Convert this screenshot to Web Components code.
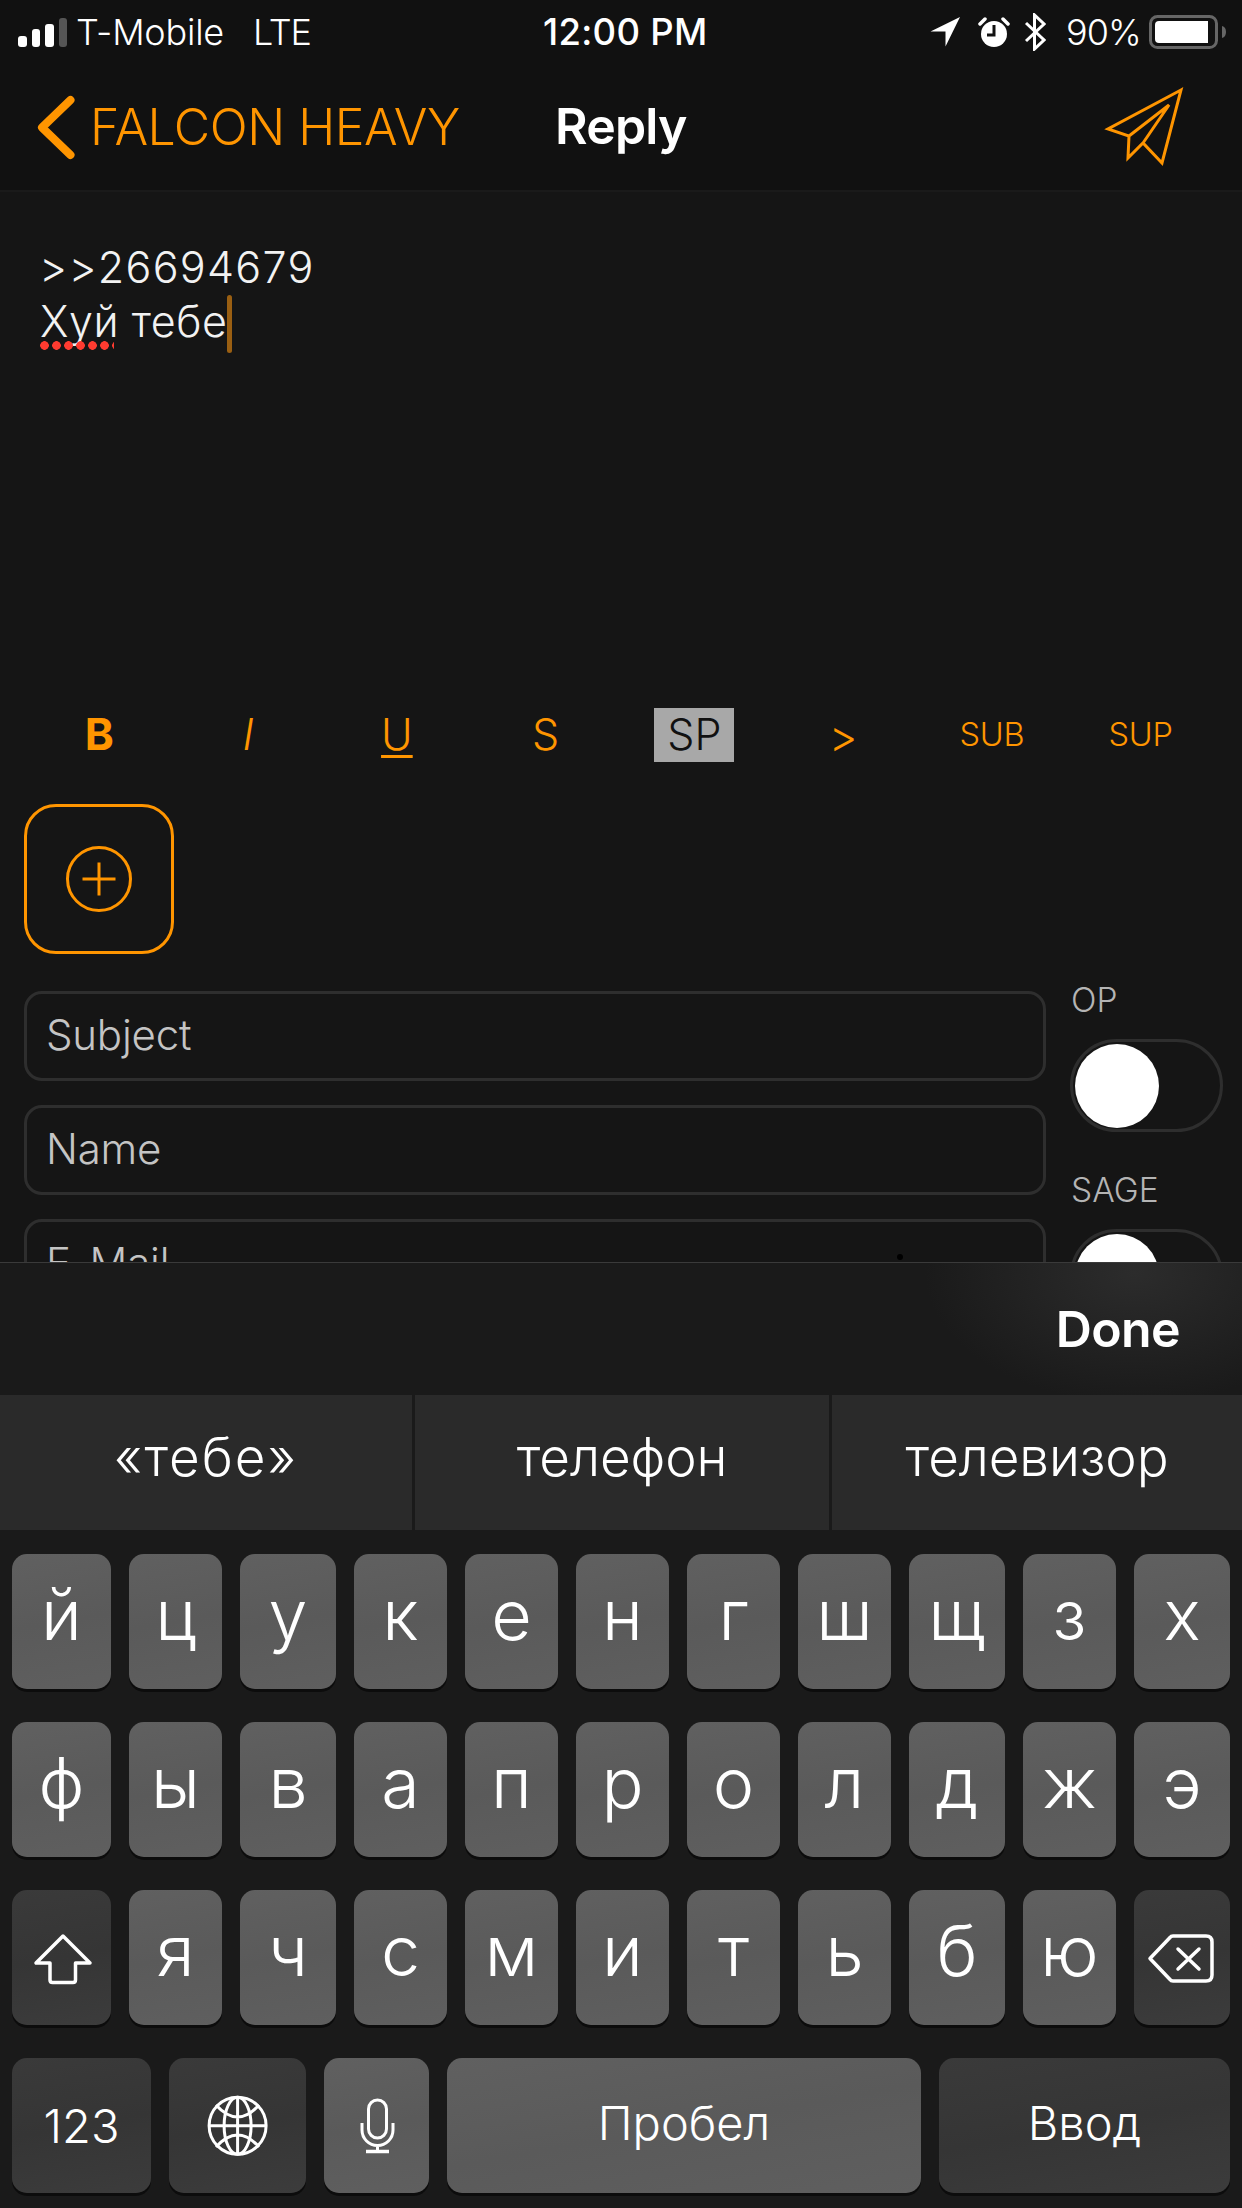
<!DOCTYPE html>
<html lang="ru"><head><meta charset="utf-8"><title>Reply</title>
<style>
html,body{margin:0;padding:0;background:#151515}
body{font-family:Inter,"Noto Sans",sans-serif;color:#fff;width:1242px;height:2208px;overflow:hidden}
</style></head>
<body>
<x-app>
  <x-status-bar></x-status-bar>
  <x-nav-bar back="FALCON HEAVY" title="Reply"></x-nav-bar>
  <x-reply-form></x-reply-form>
  <x-accessory-bar>Done</x-accessory-bar>
  <x-suggestions></x-suggestions>
  <x-keyboard></x-keyboard>
</x-app>
<script>
function def(name, css, html, init){
  customElements.define(name, class extends HTMLElement{
    constructor(){super();const r=this.attachShadow({mode:'open'});
      const h=typeof html==='function'?html(this):html;
      r.innerHTML='<style>'+css+'</style>'+h;}
    connectedCallback(){
      if(typeof html==='function'){const r=this.shadowRoot;r.innerHTML='<style>'+css+'</style>'+html(this);}
      if(init)init(this);}
  });
}
def('x-app',':host{display:flex;flex-direction:column;width:1242px;height:2208px;overflow:hidden;background:#151515}','<slot></slot>');

def('x-status-bar',`
:host{display:flex;align-items:center;height:64px;background:#111;color:#fff;font-size:36px;font-weight:300;flex:none;position:relative}
.l{display:flex;align-items:center;width:543px;padding-left:18px;box-sizing:border-box}
.bars{display:flex;align-items:flex-end;gap:5px;height:29px;margin-top:1px}
.bars i{display:block;width:8.5px;border-radius:3px;background:#fff}
.car{margin-left:9px;letter-spacing:-.2px;padding-bottom:1px}.lte{margin-left:29px;letter-spacing:-1.2px;padding-bottom:1px}
.t{font-weight:500;font-size:36.5px;letter-spacing:.3px;width:166px;white-space:nowrap}
.r{display:flex;align-items:center;margin-left:auto;height:64px}
svg{display:block}
.pct{letter-spacing:-1px;width:72px;margin-left:20px}
.bat{margin-left:11px;margin-right:15px}
`,`<div class="l"><div class="bars"><i style="height:11px"></i><i style="height:18px"></i><i style="height:23px"></i><i style="height:29px;background:#555"></i></div><span class="car">T-Mobile</span><span class="lte">LTE</span></div>
<span class="t">12:00 PM</span>
<div class="r">
<svg width="32" height="32" viewBox="0 0 32 32"><path d="M31 1 L1.500 15.500 H16.500 V30.500 Z" fill="#fff"/></svg>
<svg width="32" height="32" viewBox="0 0 32 32" style="margin-left:17px"><circle cx="16" cy="18" r="13" fill="#fff"/><path d="M2 8 L7 3 M30 8 L25 3" stroke="#fff" stroke-width="3.500" stroke-linecap="round"/><path d="M16 9 V19 H9" stroke="#111" stroke-width="3" fill="none"/></svg>
<svg width="22" height="38" viewBox="0 0 22 38" style="margin-left:14px"><path d="M2 10 L20 27 L10.500 36 V2 L20 11 L2 28" fill="none" stroke="#fff" stroke-width="3"/></svg>
<span class="pct">90%</span>
<svg class="bat" width="78" height="36" viewBox="0 0 78 36"><rect x="1.500" y="2.500" width="66" height="31" rx="7" fill="none" stroke="#666" stroke-width="3"/><path d="M6 11 Q6 7 10 7 H59 V29 H10 Q6 29 6 25 Z" fill="#fff"/><path d="M73 12 Q77 13 77 18 Q77 23 73 24 Z" fill="#666"/></svg>
</div>`);

def('x-nav-bar',`
:host{display:flex;align-items:center;height:126px;background:#111;border-bottom:2px solid #1a1a1a;flex:none}
.back{display:flex;align-items:center;width:522px;margin-left:34px;flex:none;color:#ff9500;font-size:50px;font-weight:300;letter-spacing:-.5px;white-space:nowrap}
.back svg{margin-right:12px;flex:none}
.title{font-weight:600;font-size:50px;color:#fff;letter-spacing:-.8px;margin:-2px 0 0 -1px}
.send{margin-left:auto;margin-right:58px;display:block}
`,h=>`<div class="back"><svg width="44" height="70" viewBox="0 0 44 70"><path d="M36.500 8 L8 35.500 L36.500 63" fill="none" stroke="#ff9500" stroke-width="8" stroke-linecap="round" stroke-linejoin="round"/></svg><span>${h.getAttribute('back')||''}</span></div>
<span class="title">${h.getAttribute('title')||''}</span>
<svg class="send" width="80" height="84" viewBox="0 0 80 84"><path d="M77 5 L4 44 L25 51 L24 73 L39 58 L58 78 Z M25 51 L65 20 L39 58" fill="none" stroke="#ff9500" stroke-width="3" stroke-linejoin="miter"/></svg>`);

def('x-editor',`
:host{display:block;height:516px;box-sizing:border-box;padding:48px 0 0 40px;font-size:43px;font-weight:300;line-height:54px;color:#f2f2f2;letter-spacing:.55px;flex:none}
.first{letter-spacing:1.3px;margin-left:-1px}
.w{position:relative;display:inline-block}
.dots{position:absolute;left:0;top:47px;height:9px;width:74px;background:radial-gradient(circle at 4.500px 4.500px,#ff3b30 4px,transparent 4.600px) 0 0/12px 9px repeat-x}
.c{position:relative;display:inline-block;width:0;height:0}
.c::after{content:"";position:absolute;left:0;top:-42px;width:5px;height:58px;border-radius:2.500px;background:#9a5f12}
`,`<div class="first">&gt;&gt;26694679</div><div><span class="w">Хуй<i class="dots"></i></span> тебе<span class="c"></span></div>`);

def('x-format-bar',`
:host{display:grid;grid-template-columns:repeat(8,148.750px);padding-left:25px;height:54px;align-items:center;justify-items:center;color:#ff9500;font-size:43px;font-weight:300;flex:none}
span{display:block;line-height:53px;height:54px}
.b{font-weight:700;font-size:44px}
.i{font-style:italic}
.u{text-decoration:underline;text-decoration-thickness:3px;text-underline-offset:5px}
.sp{background:#a8a8a8;color:#111;width:80px;height:54px;text-align:center;line-height:52px}
.q{font-size:44px;line-height:56px}
.sm{font-size:32.5px;letter-spacing:-.2px}
`,`<span class="b">B</span><span class="i">I</span><span class="u">U</span><span>S</span><span class="sp">SP</span><span class="q">&gt;</span><span class="sm">SUB</span><span class="sm">SUP</span>`);

def('x-attach-button',`
:host{display:flex;align-items:center;justify-content:center;width:150px;height:150px;box-sizing:border-box;border:3px solid #ff9500;border-radius:32px;flex:none}
svg{display:block}
`,`<svg width="70" height="70" viewBox="0 0 70 70"><circle cx="35" cy="35" r="31.500" fill="none" stroke="#ff9500" stroke-width="3"/><path d="M18.500 35 H51.500 M35 18.500 V51.500" stroke="#ff9500" stroke-width="3" fill="none"/></svg>`);

def('x-text-field',`
:host{display:flex;align-items:center;height:90px;box-sizing:border-box;border:3px solid #2e2e2e;border-radius:18px;padding:0 0 4px 19px;font-size:42px;font-weight:300;color:#c4c4c4;flex:none;position:relative;letter-spacing:-.2px}
`,`<slot></slot>`);

def('x-switch',`
:host{display:block;width:153px;height:93px;box-sizing:border-box;border:3px solid #2e2e2e;border-radius:47px;position:relative;flex:none}
i{position:absolute;left:2px;top:2px;width:84px;height:84px;border-radius:50%;background:#fff}
`,`<i></i>`);

def('x-reply-form',`
:host{display:flex;flex-direction:column;height:1070px;overflow:hidden;flex:none;background:#151515;position:relative}
.body{padding:42px 0 0 24px;display:flex;flex-direction:column}
.row{display:flex;margin-top:37px}
.fields{display:flex;flex-direction:column;gap:24px;width:1022px;flex:none}
.side{margin-left:24px;display:flex;flex-direction:column;margin-top:-9px}
.lab{height:36px;line-height:36px;font-size:33.5px;font-weight:300;color:#b4b4b4;margin:0 0 21px 1px;letter-spacing:0}
x-switch{margin-bottom:40px}
.dot{position:absolute;left:897px;top:1062px;width:6px;height:6px;border-radius:50%;background:#000}
`,`<x-editor></x-editor><x-format-bar></x-format-bar>
<div class="body"><x-attach-button></x-attach-button>
<div class="row"><div class="fields"><x-text-field>Subject</x-text-field><x-text-field>Name</x-text-field><x-text-field>E-Mail</x-text-field></div>
<div class="side"><div class="lab">OP</div><x-switch></x-switch><div class="lab">SAGE</div><x-switch></x-switch></div></div></div><i class="dot"></i>`);

def('x-accessory-bar',`
:host{display:flex;align-items:center;justify-content:flex-end;height:133px;box-sizing:border-box;border-top:1px solid #3a3a3a;padding-right:62px;flex:none;font-size:50px;font-weight:600;color:#fff;letter-spacing:-.6px;background:radial-gradient(ellipse 210px 130px at 1135px 10px,#2c2c2c,#1a1a1a)}
`,`<slot></slot>`);

def('x-suggestions',`
:host{display:grid;grid-template-columns:412px 3px 414px 3px 1fr;height:135px;background:#2a2a2a;font-size:53px;font-weight:300;color:#fff;flex:none;letter-spacing:-.1px}
span{display:flex;align-items:center;justify-content:center;padding-bottom:11px}
.a{letter-spacing:2px}
i{background:#1a1a1a}
`,`<span class="a">«тебе»</span><i></i><span>телефон</span><i></i><span>телевизор</span>`);

def('x-key',`
:host{display:flex;align-items:center;justify-content:center;height:135px;box-sizing:border-box;border-radius:15px;background:linear-gradient(170deg,#606060,#5a5a5a 50%,#5f5f5f);box-shadow:0 3px 0 #0c0c0c;color:#fff;font-size:70px;font-weight:300;flex:none;position:relative;padding-bottom:14px}
:host([dark]){background:linear-gradient(170deg,#3a3a3a,#353535 50%,#3c3c3c)}
:host([small]){font-size:47px;padding-bottom:0}
:host([up]){padding-bottom:7px}
:host([icon]){padding:0}
::slotted(svg){display:block}
`,`<slot></slot>`);

const rows=[
 [['й',99],['ц',93],['у',96],['к',93],['е',93],['н',93],['г',93],['ш',93],['щ',96],['з',93],['х',96]],
 [['ф',99],['ы',93],['в',96],['а',93],['п',93],['р',93],['о',93],['л',93],['д',96],['ж',93],['э',96]],
];
const k=(t,w)=>`<x-key style="width:${w}px">${t}</x-key>`;
const shift=`<svg width="99" height="135" viewBox="0 0 99 135"><path d="M51 46 L24 73 H38 V90 Q38 92.500 40.500 92.500 H61 Q63.500 92.500 63.500 90 V73 H78 Z" fill="none" stroke="#fff" stroke-width="3.500" stroke-linejoin="round"/></svg>`;
const bs=`<svg width="96" height="135" viewBox="0 0 96 135"><path d="M16 68.500 L36 47.500 Q37 46 39 46 H72 Q78 46 78 52 V85 Q78 91 72 91 H39 Q37 91 36 89.500 Z" fill="none" stroke="#fff" stroke-width="3.500" stroke-linejoin="round"/><path d="M44 59 L65 79 M65 59 L44 79" stroke="#fff" stroke-width="3.500" stroke-linecap="round"/></svg>`;
const globe=`<svg width="137" height="135" viewBox="0 0 137 135"><g fill="none" stroke="#fff" stroke-width="3"><circle cx="68.600" cy="67.700" r="28.500"/><ellipse cx="68.600" cy="67.700" rx="13.500" ry="28.500"/><path d="M68.600 39 V96.500 M40 67.700 H97 M47 47 Q68.600 71 90 47 M47 89 Q68.600 65 90 89"/></g></svg>`;
const mic=`<svg width="105" height="135" viewBox="0 0 105 135"><g fill="none" stroke="#fff" stroke-width="3"><rect x="44.500" y="42" width="18" height="38" rx="9"/><path d="M38 65 V72 A15.500 15.500 0 0 0 69 72 V65 M53.500 87.500 V94"/></g><path d="M42 93.500 H65" stroke="#fff" stroke-width="3.500"/></svg>`;
def('x-keyboard',`
:host{display:flex;flex-direction:column;gap:33px;background:#1a1a1a;padding:24px 12px 0;height:691px;box-sizing:border-box;flex:none}
.row{display:flex;gap:18px}
`,`<div class="row">${rows[0].map(r=>k(r[0],r[1])).join('')}</div>
<div class="row">${rows[1].map(r=>k(r[0],r[1])).join('')}</div>
<div class="row"><x-key dark icon style="width:99px">${shift}</x-key>${[['я',93],['ч',96],['с',93],['м',93],['и',93],['т',93],['ь',93],['б',96],['ю',93]].map(r=>k(r[0],r[1])).join('')}<x-key dark icon style="width:96px">${bs}</x-key></div>
<div class="row"><x-key dark small style="width:139px">123</x-key><x-key dark icon style="width:137px">${globe}</x-key><x-key icon style="width:105px">${mic}</x-key><x-key small up style="width:474px">Пробел</x-key><x-key dark small up style="width:291px">Ввод</x-key></div>`);
</script>
</body></html>
